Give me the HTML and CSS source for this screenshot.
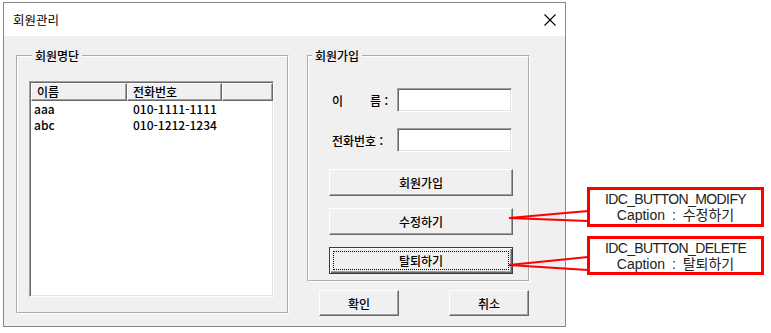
FILE: index.html
```html
<!DOCTYPE html>
<html lang="ko">
<head>
  <meta charset="UTF-8" />
  <title>회원관리</title>
  <link rel="stylesheet" href="styles.css">
</head>
<body>

<div class="screen">
  <div class="dialog">
    <div class="titlebar">
      <span class="title">회원관리</span>
      <svg class="close" viewBox="0 0 12 12"><path d="M0.5 0.5L11.5 11.5M11.5 0.5L0.5 11.5"/></svg>
    </div>

    <div class="dialog-body">
      <fieldset class="group group-list">
        <legend>회원명단</legend>
        <div class="listview">
          <div class="lv-header">
            <div class="lv-col">이름</div>
            <div class="lv-col">전화번호</div>
            <div class="lv-col"></div>
          </div>
          <div class="lv-row"><span>aaa</span><span>010-1111-1111</span></div>
          <div class="lv-row"><span>abc</span><span>010-1212-1234</span></div>
        </div>
      </fieldset>

      <div class="side">
        <fieldset class="group group-join">
          <legend>회원가입</legend>
          <div class="field">
            <label class="field-label" for="name"><span>이</span><span>름 :</span></label>
            <input class="edit" type="text" id="name" />
          </div>
          <div class="field">
            <label class="field-label" for="phone">전화번호 :</label>
            <input class="edit" type="text" id="phone" />
          </div>
          <button type="button" class="btn btn-wide">회원가입</button>
          <button type="button" class="btn btn-wide">수정하기</button>
          <button type="button" class="btn btn-wide btn-default"><span class="focus">탈퇴하기</span></button>
        </fieldset>

        <div class="dialog-actions">
          <button type="button" class="btn btn-small">확인</button>
          <button type="button" class="btn btn-small">취소</button>
        </div>
      </div>
    </div>
  </div>

  <div class="notes">
    <div class="note"><span class="note-id">IDC_BUTTON_MODIFY</span><span class="note-caption">Caption : 수정하기</span></div>
    <div class="note"><span class="note-id">IDC_BUTTON_DELETE</span><span class="note-caption">Caption : 탈퇴하기</span></div>
  </div>
</div>

<!-- callout lines from the notes to the buttons -->
<svg class="callouts" viewBox="0 0 771 333">
  <polyline points="588,211 509,218 588,221" />
  <polyline points="588,257 509,265 588,270" />
</svg>

</body>
</html>
```

FILE: styles.css
```css
body {
  margin: 0;
  width: 771px;
  height: 333px;
  overflow: hidden;
  position: relative;
  background-color: #fff;
  font-family: "Noto Sans CJK KR", "Liberation Sans", sans-serif;
  font-size: 12px;
  color: #000;
}

.screen {
  display: flex;
  padding: 2px 0 0 3px;
}

/* dialog window */
.dialog {
  width: 563px;
  height: 325px;
  box-sizing: border-box;
  border: 1px solid #888;
  background-color: #f0f0f0;
  display: flex;
  flex-direction: column;
  font-weight: 500;
}

.titlebar {
  height: 33px;
  flex-shrink: 0;
  background-color: #fff;
  display: flex;
  align-items: center;
  justify-content: space-between;
  padding: 0 9px 0 9px;
}

.title {
  font-weight: 400;
  font-size: 12.5px;
}

.close {
  width: 12px;
  height: 12px;
  stroke: #000;
  stroke-width: 1.1;
  fill: none;
}

.dialog-body {
  flex-grow: 1;
  display: flex;
  gap: 18px;
  padding: 13px 0 0 12px;
}

/* group boxes */
.group {
  margin: 0;
  box-sizing: border-box;
  border: 2px groove #fff;
  padding: 0;
  min-width: 0;
}

.group legend {
  line-height: 14px;
  padding: 0 3px;
  margin-left: 3px;
}

.group-list {
  width: 273px;
  height: 265px;
  padding: 18px 0 0 11px;
}

.side {
  width: 223px;
  display: flex;
  flex-direction: column;
}

.group-join {
  width: 223px;
  height: 233px;
  padding: 25px 0 0 0;
}

/* list control */
.listview {
  width: 245px;
  height: 216px;
  box-sizing: border-box;
  background-color: #fff;
  border: 1px solid;
  border-color: #a0a0a0 #fff #fff #a0a0a0;
  box-shadow: inset 1px 1px 0 #696969, inset -1px -1px 0 #e3e3e3;
  padding: 1px 0 0 1px;
  overflow: hidden;
}

.lv-header {
  display: grid;
  grid-template-columns: 96px 95px 1fr;
  height: 18px;
  background-color: #f0f0f0;
}

.lv-col {
  box-sizing: border-box;
  border: 1px solid;
  border-color: #fff #696969 #696969 #fff;
  box-shadow: inset -1px -1px 0 #a0a0a0;
  padding-left: 5px;
  line-height: 15px;
}

.lv-row {
  display: grid;
  grid-template-columns: 96px 95px;
  line-height: 16px;
}

.lv-row span:first-child {
  padding-left: 3px;
}

.lv-row span:last-child {
  padding-left: 6px;
}

/* edit fields */
.field {
  display: flex;
  align-items: center;
  margin-left: 23px;
  height: 24px;
}

.field + .field {
  margin-top: 16px;
}

.field-label {
  width: 56px;
  margin-right: 9px;
  display: flex;
  justify-content: space-between;
}

.edit {
  width: 115px;
  height: 24px;
  box-sizing: border-box;
  margin: 0;
  border: 1px solid;
  border-color: #a0a0a0 #fff #fff #a0a0a0;
  box-shadow: inset 1px 1px 0 #696969, inset -1px -1px 0 #e3e3e3;
  background-color: #fff;
  padding: 0 3px;
  font: inherit;
}

/* push buttons */
.btn {
  box-sizing: border-box;
  margin: 0;
  padding: 0;
  border: 1px solid;
  border-color: #fff #696969 #696969 #fff;
  box-shadow: inset -1px -1px 0 #a0a0a0;
  background-color: #f0f0f0;
  font: inherit;
  color: #000;
}

.btn-wide {
  display: block;
  width: 184px;
  height: 27px;
  margin: 12px 0 0 20px;
}

.field + .btn-wide {
  margin-top: 17px;
}

.btn-default {
  border-color: #3c3c3c;
  box-shadow: inset 1px 1px 0 #fff, inset -1px -1px 0 #696969, inset -2px -2px 0 #a0a0a0;
  padding: 3px;
}

.btn-default .focus {
  display: flex;
  align-items: center;
  justify-content: center;
  height: 100%;
  box-sizing: border-box;
  border: 1px dotted #000;
}

.dialog-actions {
  display: flex;
  justify-content: space-between;
  margin-top: 8px;
  padding: 0 1px 0 12px;
}

.btn-small {
  width: 80px;
  height: 26px;
}

/* annotation boxes */
.notes {
  display: flex;
  flex-direction: column;
  gap: 9px;
  margin: 185px 0 0 21px;
}

.note {
  width: 177px;
  height: 40px;
  box-sizing: border-box;
  border: 3px solid #ff0000;
  background-color: #fff;
  display: flex;
  flex-direction: column;
  justify-content: center;
  align-items: center;
  font-family: "Liberation Sans", "Noto Sans CJK KR", sans-serif;
  font-size: 14px;
  line-height: 16px;
  color: #222;
}

.note + .note {
  height: 39px;
}

.note-id {
  letter-spacing: -0.6px;
}

.note-caption {
  word-spacing: 3px;
}

.callouts {
  position: absolute;
  left: 0;
  top: 0;
  width: 771px;
  height: 333px;
  pointer-events: none;
}

.callouts polyline {
  fill: none;
  stroke: #ff0000;
  stroke-width: 2.2;
}
```
